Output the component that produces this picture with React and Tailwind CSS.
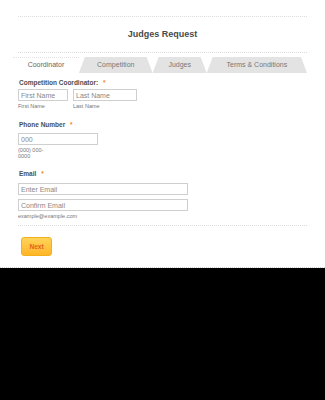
import React from "react";

const tabs = [
  { label: "Competition", w: "w-[75px]" },
  { label: "Judges", w: "w-[55px]" },
  { label: "Terms & Conditions", w: "w-[102px]" },
];

function Field({ placeholder, className }) {
  return (
    <input
      readOnly
      placeholder={placeholder}
      className={
        "h-[12px] border border-[#cfcfcf] bg-white px-[2px] text-[7px] leading-[10px] text-[#555] placeholder:text-[#888] outline-none " +
        className
      }
    />
  );
}

function Label({ children, className }) {
  return (
    <div className={"ml-[1px] h-[8px] text-[6.5px] leading-[8px] font-bold text-[#4d4d4d] " + className}>
      {children} <span className="ml-[3px] text-[#f08a24]">*</span>
    </div>
  );
}

export default function App() {
  return (
    <div className="min-h-[400px] w-full bg-black font-['Liberation_Sans',Arial,sans-serif]">
      <div className="h-[268px] bg-white border-b border-dotted border-[#cfcfcf] px-[18px] pt-[16px]">
        <div className="border-t border-dotted border-[#dcdcdc]" />
        <h1 className="flex h-[35px] items-center justify-center pt-[1px] text-[9px] font-bold text-[#4a4a4a]">
          Judges Request
        </h1>
        <div className="border-t border-dotted border-[#dcdcdc]" />

        {/* tabs */}
        <div className="-ml-[5px] mt-[4px] flex h-[16px]">
          <div className="flex w-[67px] items-center justify-center border-t border-dotted border-[#e2e2e2] bg-white text-[7px] text-[#666]">
            Coordinator
          </div>
          {tabs.map((t) => (
            <div
              key={t.label}
              className={
                "flex items-center justify-center bg-[#e3e3e3] text-[7px] text-[#777] [clip-path:polygon(0_100%,6px_0,calc(100%-6px)_0,100%_100%)] " +
                t.w
              }
            >
              {t.label}
            </div>
          ))}
        </div>

        <Label className="mt-[6px]">Competition Coordinator:</Label>
        <div className="mt-[2px] flex gap-[5px]">
          <div className="flex flex-col">
            <Field placeholder="First Name" className="w-[50px]" />
            <span className="mt-[2px] h-[6px] text-[5.5px] leading-[6px] text-[#777]">First Name</span>
          </div>
          <div className="flex flex-col">
            <Field placeholder="Last Name" className="w-[64px]" />
            <span className="mt-[2px] h-[6px] text-[5.5px] leading-[6px] text-[#777]">Last Name</span>
          </div>
        </div>

        <Label className="mt-[12px]">Phone Number</Label>
        <Field placeholder="000" className="mt-[4px] block w-[80px]" />
        <div className="mt-[2px] w-[30px] text-[5.5px] leading-[6px] text-[#777]">(000) 000-0000</div>

        <Label className="mt-[11px]">Email</Label>
        <Field placeholder="Enter Email" className="mt-[5px] block w-[170px]" />
        <Field placeholder="Confirm Email" className="mt-[4px] block w-[170px]" />
        <div className="mt-[2px] h-[6px] text-[5.5px] leading-[6px] text-[#777]">example@example.com</div>

        <div className="mt-[6px] border-t border-dotted border-[#dcdcdc]" />

        <button className="ml-[3px] mt-[11px] flex h-[19px] w-[31px] items-center justify-center rounded-[3px] border border-[#f2b01e] bg-gradient-to-b from-[#ffd457] to-[#ffb524] text-[6.5px] font-bold text-[#e0601a]">
          Next
        </button>
      </div>
    </div>
  );
}
